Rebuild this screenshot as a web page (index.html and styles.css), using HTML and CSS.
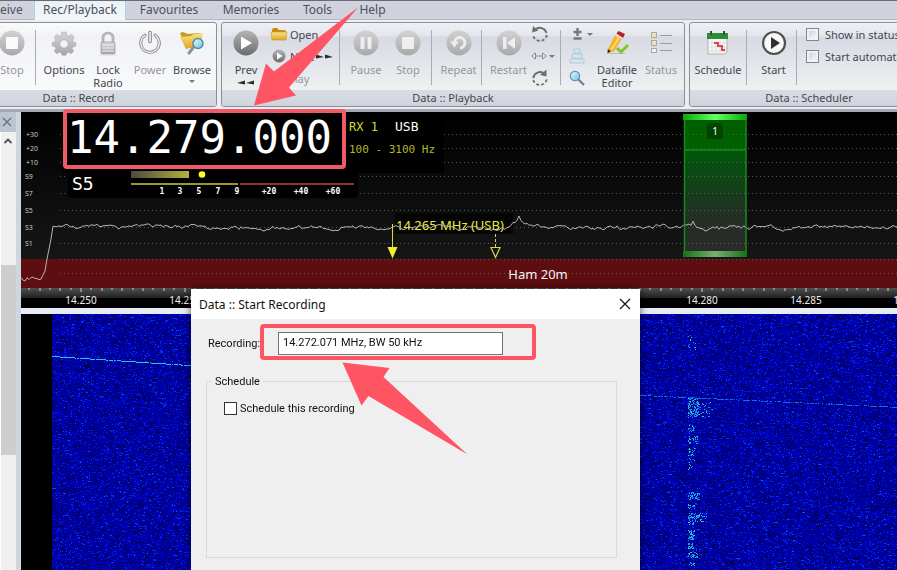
FILE: index.html
```html
<!DOCTYPE html>
<html lang="en">
<head>
<meta charset="utf-8">
<title>Data :: Start Recording</title>
<link rel="stylesheet" href="styles.css">
</head>
<body>
<svg class="defs" aria-hidden="true">
  <defs>
    <linearGradient id="ball" x1="0" y1="0" x2="0" y2="1"><stop offset="0" stop-color="#d2d2d4"/><stop offset="1" stop-color="#a9a9ab"/></linearGradient>
    <linearGradient id="ballDark" x1="0" y1="0" x2="0" y2="1"><stop offset="0" stop-color="#b4b4b6"/><stop offset="1" stop-color="#6c6c6e"/></linearGradient>
    <linearGradient id="metal" x1="0" y1="0" x2="0" y2="1"><stop offset="0" stop-color="#d6d6d6"/><stop offset="1" stop-color="#a6a6a6"/></linearGradient>
    <linearGradient id="gold" x1="0" y1="0" x2="0" y2="1"><stop offset="0" stop-color="#fbe389"/><stop offset="1" stop-color="#dfa51f"/></linearGradient>
    <linearGradient id="glass" x1="0" y1="0" x2="1" y2="1"><stop offset="0" stop-color="#e8fbff"/><stop offset="1" stop-color="#6fc0dc"/></linearGradient>
  </defs>
</svg>
<div class="app">
  <nav class="tabs">
    <a class="tab tab-receive" href="#receive">Receive</a>
    <a class="tab tab-active" href="#rec">Rec/Playback</a>
    <a class="tab tab-wide" href="#favourites">Favourites</a>
    <a class="tab tab-mid" href="#memories">Memories</a>
    <a class="tab tab-small" href="#tools">Tools</a>
    <a class="tab tab-small" href="#help">Help</a>
  </nav>

  <div class="ribbon">
    <section class="group group-record">
      <div class="items">
        <button class="big w46 off"><svg width="28" height="28" viewBox="0 0 28 28"><circle cx="14" cy="14" r="12.500" fill="url(#ball)"/><rect x="8" y="8" width="12" height="12" rx="1" fill="#fafafa"/></svg><span>Stop</span></button>
        <i class="sep"></i>
        <button class="big w50"><svg width="28" height="28" viewBox="0 0 28 28"><g fill="url(#metal)" stroke="#a2a2a2" stroke-width=".6" transform="translate(1.400 1.400) scale(.9)"><path fill-rule="evenodd" d="M11.500 2h5l.6 3.600 2.300 1L22.400 4.500l3 3.200-2 3 .9 2.200L27 13.500v4l-3 .7-1 2.200 1.800 2.600-3 3-2.700-1.700-2.200 1-.7 2.200h-4.400l-.7-2.400-2.200-.9-2.700 1.800-3-3 1.800-2.800-1-2.200-3-.6v-4l3-.6 1-2.200-1.900-3 3-3 3 2 2.100-1zM14 10.500a4.500 4.500 0 1 0 0 9 4.500 4.500 0 0 0 0-9z"/></g></svg><span>Options</span></button>
        <button class="big w42"><svg width="28" height="28" viewBox="0 0 28 28"><path d="M9 14V9a5 5 0 0 1 10 0v5" fill="none" stroke="#9c9c9c" stroke-width="2.600"/><path d="M9 14V9a5 5 0 0 1 10 0v5" fill="none" stroke="#ddd" stroke-width=".8"/><rect x="7" y="13" width="14" height="12" rx="1.500" fill="url(#metal)" stroke="#989898" stroke-width=".7"/><path d="M8 16h12M8 19h12M8 22h12" stroke="#f0f0f0" stroke-width="1"/><path d="M5 26h18" stroke="#ddd"/></svg><span>Lock<br>Radio</span></button>
        <button class="big w42 off"><svg width="28" height="28" viewBox="0 0 28 28"><path d="M9 6.200a9.300 9.300 0 1 0 10 0" fill="none" stroke="#88888b" stroke-width="3" stroke-linecap="round"/><path d="M9 6.200a9.300 9.300 0 1 0 10 0" fill="none" stroke="#f2f2f4" stroke-width="1.200" stroke-linecap="round"/><path d="M14 3.500v9" stroke="#88888b" stroke-width="3.600" stroke-linecap="round"/><path d="M14 3.500v9" stroke="#f2f2f4" stroke-width="1.600" stroke-linecap="round"/></svg><span>Power</span></button>
        <button class="big w42"><svg width="28" height="28" viewBox="0 0 28 28"><path d="M2 4l3-1 5 2 11-1 3 2-2 12-14 1z" fill="#c49d1d"/><path d="M2 8l11-1 3-2 9-1-3 12-14 4z" fill="url(#gold)"/><path d="M15 19l-4 5" stroke="#8694a0" stroke-width="3" stroke-linecap="round"/><circle cx="20" cy="14.500" r="5" fill="url(#glass)" stroke="#50909f" stroke-width="1.500"/></svg><span>Browse</span><b class="caret"></b></button>
      </div>
      <h2>Data :: Record</h2>
    </section>

    <section class="group group-playback">
      <div class="items">
        <button class="big w48"><svg width="28" height="28" viewBox="0 0 28 28"><circle cx="14" cy="14" r="12.500" fill="url(#ballDark)"/><path d="M9 7.500L20 14 9 20.500z" fill="#fff"/></svg><span>Prev</span><svg class="arrows" width="18" height="5" viewBox="0 0 18 5"><path d="M0 3L8 .5v4zM9 3l8-2.500v4z" fill="#2c2c30"/></svg></button>
        <div class="stack stack-files">
          <button class="small"><svg width="18" height="16" viewBox="0 0 18 16"><path d="M2 4q0-2 2-2h3l2 2h5q2 0 2 2v7H2z" fill="#c78b15"/><path d="M1 6h16l-1 8H2z" fill="url(#gold)" stroke="#c89428" stroke-width=".6"/></svg>Open</button>
          <button class="small"><svg width="18" height="16" viewBox="0 0 18 16"><circle cx="9" cy="8" r="6.500" fill="url(#ballDark)"/><path d="M7 4.500L12.500 8 7 11.500z" fill="#fff"/></svg>Next<svg class="next-arrows" width="18" height="5" viewBox="0 0 18 5"><path d="M8 3L0 .5v4zM17 3L9 .5v4z" fill="#2c2c30"/></svg></button>
          <button class="small off small-play">Play</button>
        </div>
        <i class="sep"></i>
        <div class="pair">
          <button class="big w42 off"><svg width="28" height="28" viewBox="0 0 28 28"><circle cx="14" cy="14" r="12.500" fill="url(#ball)"/><path d="M8.500 8h4v12h-4zM15.500 8h4v12h-4z" fill="#eee"/></svg><span>Pause</span></button>
          <button class="big w42 off"><svg width="28" height="28" viewBox="0 0 28 28"><circle cx="14" cy="14" r="12.500" fill="url(#ball)"/><rect x="8" y="8" width="12" height="12" rx="1" fill="#eee"/></svg><span>Stop</span></button>
        </div>
        <i class="sep"></i>
        <button class="big w49 off"><svg width="28" height="28" viewBox="0 0 28 28"><circle cx="14" cy="14" r="12.500" fill="url(#ball)"/><path d="M9.500 13.500A5.200 5.200 0 1 1 15 19" fill="none" stroke="#eee" stroke-width="3"/><path d="M5 12.500h9l-4.500 6z" fill="#eee"/></svg><span>Repeat</span></button>
        <i class="sep"></i>
        <button class="big w49 off"><svg width="28" height="28" viewBox="0 0 28 28"><circle cx="14" cy="14" r="12.500" fill="url(#ball)"/><path d="M8 8h3.500v12H8zM20 8v12l-8-6z" fill="#eee"/></svg><span>Restart</span></button>
        <div class="stack stack-step">
          <button class="glyph" aria-label="Step back"><svg width="18" height="18" viewBox="0 0 18 18"><path d="M5 4a7 7 0 0 1 10.500 4" fill="none" stroke="#6d6e72" stroke-width="2"/><path d="M15.800 10a7 7 0 0 1-13.600 1" fill="none" stroke="#6d6e72" stroke-width="1.800" stroke-dasharray="3 2"/><path d="M1 7.500L2 1l5.500 4.500z" fill="#6d6e72"/></svg></button>
          <button class="glyph" aria-label="Step size"><svg width="16" height="8" viewBox="0 0 16 8"><path d="M4.500 1v6L.7 4zM11.500 1v6l3.800-3z" fill="#eee" stroke="#8a8a8e"/><path d="M5 4h6" stroke="#8a8a8e"/></svg><b class="caret"></b></button>
          <button class="glyph" aria-label="Step forward"><svg width="18" height="18" viewBox="0 0 18 18"><path d="M12.500 4A7 7 0 0 0 2.200 9" fill="none" stroke="#6d6e72" stroke-width="2"/><path d="M2.200 11a7 7 0 0 0 13.600-1" fill="none" stroke="#6d6e72" stroke-width="1.800" stroke-dasharray="3 2"/><path d="M15.500 .5v7L9 6z" fill="#6d6e72"/></svg></button>
        </div>
        <i class="sep"></i>
        <div class="stack stack-zoom">
          <button class="glyph" aria-label="Gain"><svg width="16" height="14" viewBox="0 0 16 14"><path d="M4.500 5h8M8.500 1v8M4.500 11.500h8" stroke="#77777b" stroke-width="2.400"/></svg><b class="caret"></b></button>
          <button class="glyph" aria-label="Layout"><svg width="16" height="16" viewBox="0 0 16 16"><path d="M5 1h6v4H5zM3 6h10v4H3zM1 11h14v4H1z" fill="#d3e6f2" stroke="#a7c2d4" stroke-width=".8"/></svg></button>
          <button class="glyph" aria-label="Zoom"><svg width="16" height="16" viewBox="0 0 16 16"><path d="M9.500 9.500L15 15" stroke="#77838d" stroke-width="2.400"/><circle cx="6" cy="6" r="4.700" fill="url(#glass)" stroke="#5c93b8" stroke-width="1.200"/></svg></button>
        </div>
        <button class="big w44"><svg width="28" height="28" viewBox="0 0 28 28"><path d="M4 24.500h18" stroke="#bbb"/><path d="M5 20L12 6l7 3.500L11.500 22 5 24z" fill="#f3b32c"/><path d="M8.500 20.500L16 8.500" stroke="#ffda76" stroke-width="2"/><path d="M13.500 4.500l2-2.500L22 5l-2 4z" fill="#b51f29"/><path d="M12.500 6l7 3.500" stroke="#ddd" stroke-width="1.500"/><path d="M4.800 20l3 2.500-3.300 1.500z" fill="#222"/><path d="M14 19l4 4 7-7" fill="none" stroke="#76cb25" stroke-width="3"/></svg><span>Datafile<br>Editor</span></button>
        <button class="big w44 off"><svg width="28" height="28" viewBox="0 0 28 28"><g stroke="#aaa598"><path d="M4.500 3.500h5v5h-5zM4.500 11.500h5v5h-5z" fill="#f2e1b4"/><path d="M4.500 19.500h5v4h-5z" fill="#f4f4f4"/></g><path d="M13 6.500h12M13 14.500h12M13 21.500h12" stroke="#9a9ca2"/></svg><span>Status</span></button>
      </div>
      <h2>Data :: Playback</h2>
    </section>

    <section class="group group-scheduler">
      <div class="items">
        <button class="big w56"><svg width="28" height="28" viewBox="0 0 28 28"><path d="M4 7h19v16l-2 2H4z" fill="#f8f8f8" stroke="#999" stroke-width=".7"/><path d="M3 4h21v6H3z" fill="#288f36"/><path d="M7 2v4M20 2v4" stroke="#444" stroke-width="2"/><path d="M5 14h17M5 18h17M5 22h17M8 11v13M12 11v13M16 11v13M20 11v13" stroke="#d4d4d4" stroke-width=".7"/><path d="M10 14h4v3h4v4h3" fill="none" stroke="#d9484e" stroke-width="2"/></svg><span>Schedule</span></button>
        <i class="sep"></i>
        <button class="big w49"><svg width="28" height="28" viewBox="0 0 28 28"><circle cx="14" cy="14" r="11" fill="#f8f8f8" stroke="#505054" stroke-width="2.200"/><path d="M11 8l9 6-9 6z" fill="#303034"/></svg><span>Start</span></button>
        <i class="sep"></i>
        <div class="stack stack-checks">
          <label class="check"><input type="checkbox">Show in status bar</label>
          <label class="check"><input type="checkbox">Start automatically</label>
        </div>
      </div>
      <h2>Data :: Scheduler</h2>
    </section>
  </div>

  <div class="work">
    <aside class="rail">
      <button class="rail-close" aria-label="Close panel"><svg width="12" height="12" viewBox="0 0 12 12"><path d="M2 2l8 8M10 2l-8 8" stroke="#6a6e74" stroke-width="1.200"/></svg></button>
      <div class="scroll">
        <svg class="scroll-up" width="10" height="8" viewBox="0 0 10 8"><path d="M1.500 6L5 2.500 8.500 6" fill="none" stroke="#505050" stroke-width="1.800"/></svg>
        <div class="thumb"></div>
      </div>
    </aside>
    <main class="receiver">
      <svg class="spectrum" width="100%" height="176">
        <defs>
          <linearGradient id="sky" x1="0" y1="0" x2="0" y2="1"><stop offset="0" stop-color="#000"/><stop offset="1" stop-color="#161616"/></linearGradient>
          <linearGradient id="meter"><stop offset="0" stop-color="#4a4a44"/><stop offset="1" stop-color="#b3b13c"/></linearGradient>
          <linearGradient id="cap"><stop offset="0" stop-color="#0aa80a"/><stop offset=".5" stop-color="#66ff66"/><stop offset="1" stop-color="#0aa80a"/></linearGradient>
          <linearGradient id="foot"><stop offset="0" stop-color="#107510"/><stop offset=".5" stop-color="#78ae78"/><stop offset="1" stop-color="#107510"/></linearGradient>
          <linearGradient id="band" x1="0" y1="0" x2="0" y2="1"><stop offset="0" stop-color="#00560a"/><stop offset=".65" stop-color="#242f26"/><stop offset="1" stop-color="#2a2a2a"/></linearGradient>
        </defs>
        <rect width="100%" height="147" fill="url(#sky)"/>
        <rect y="147" width="100%" height="29" fill="#5e0e11"/>
        <rect x="663" y="8" width="62" height="30" fill="#006000"/>
        <rect x="663" y="38" width="62" height="102" fill="url(#band)"/>
        <g class="grid">
          <path d="M39 22h2000M39 36h2000M39 50h2000M39 64h2000M39 81h2000M39 98h2000M39 115h2000M39 131h2000M39 147h2000M39 161h2000" transform="translate(0 .5)"/>
        </g>
        <g class="levels">
          <text x="5" y="25">+30</text><text x="5" y="39">+20</text><text x="5" y="53">+10</text><text x="4" y="67">S9</text><text x="4" y="84">S7</text><text x="4" y="101">S5</text><text x="4" y="118">S3</text><text x="4" y="134">S1</text>
        </g>
        <rect x="42" width="381" height="61" fill="#000"/>
        <rect x="47" y="50" width="290" height="36" rx="4" fill="#000"/>
        <text class="frequency" x="46" y="41">14.279.000</text>
        <text class="rx" x="328" y="19">RX 1</text>
        <text class="mode" x="374" y="19">USB</text>
        <text class="filter" x="328" y="41">100 - 3100 Hz</text>
        <text class="signal" x="51" y="78">S5</text>
        <rect x="110" y="59" width="58" height="7" fill="url(#meter)"/>
        <circle cx="181" cy="62.500" r="3.300" fill="#fdfd20"/>
        <path d="M110 72h107" stroke="#99962e" stroke-width="2"/>
        <path d="M219 72h114" stroke="#93302f" stroke-width="2"/>
        <g class="meter-scale"><text x="141" y="82">1</text><text x="159" y="82">3</text><text x="178" y="82">5</text><text x="197" y="82">7</text><text x="216" y="82">9</text><text x="248" y="82">+20</text><text x="280" y="82">+40</text><text x="312" y="82">+60</text></g>
        <rect x="374" y="101" width="118" height="21" fill="#050505"/>
        <text class="marker" x="375" y="118">14.265 MHz (USB)</text>
        <path d="M371.500 112v24" stroke="#d8d850"/>
        <path d="M366.500 135h10l-5 11.500z" fill="#f0f030"/>
        <path d="M474.500 122v14" stroke="#d8d850" stroke-dasharray="3 2"/>
        <path d="M470 135.500h9l-4.500 10z" fill="none" stroke="#d8d850" stroke-width="1.200"/>
        <polyline id="trace" fill="none" stroke="#b4b4b4" stroke-width="1"/>
        <path d="M663.500 8v132M725 8v132M663 38h62" stroke="#178a1d" stroke-width="1.500"/>
        <rect x="662" y="2" width="64" height="6" fill="url(#cap)"/>
        <rect x="662" y="139" width="64" height="6" fill="url(#foot)"/>
        <rect x="686" y="11" width="16" height="16" rx="2" fill="#004400"/>
        <text class="slot" x="694" y="23">1</text>
        <text class="band-name" x="517" y="167">Ham 20m</text>
      </svg>
      <svg class="axis" width="100%" height="20">
        <defs><linearGradient id="rule" x1="0" y1="0" x2="0" y2="1"><stop offset="0" stop-color="#505050"/><stop offset="1" stop-color="#202020"/></linearGradient></defs>
        <rect width="100%" height="10" fill="url(#rule)"/>
        <g id="ticks" fill="#8c8c8c"></g>
        <g id="labels"></g>
      </svg>
      <canvas id="waterfall" class="waterfall"></canvas>
    </main>
  </div>

  <form class="dialog">
    <header>
      <h1>Data :: Start Recording</h1>
      <button type="button" class="close" aria-label="Close"><svg width="12" height="12" viewBox="0 0 12 12"><path d="M1 1l10 10M11 1L1 11" stroke="#111" stroke-width="1.200"/></svg></button>
    </header>
    <div class="field">
      <label for="recording">Recording:</label>
      <input id="recording" type="text" value="14.272.071 MHz, BW 50 kHz">
    </div>
    <fieldset>
      <legend>Schedule</legend>
      <label class="tick"><input type="checkbox">Schedule this recording</label>
    </fieldset>
  </form>

  <svg class="notes" width="897" height="570" aria-hidden="true">
    <rect x="65" y="111" width="279" height="56" rx="2" fill="none" stroke="#f05a68" stroke-width="4"/>
    <path d="M254 105.500L266 63.500 274 71.500 358.500 7 289 87.500 296 95.500z" fill="#ff5464"/>
    <rect x="262" y="326" width="272" height="32" rx="2" fill="none" stroke="#ff5464" stroke-width="4"/>
    <path d="M342.500 362.500L389.500 368 383.500 377 467.500 454.500 368.500 396 361.500 405.500z" fill="#ff5464"/>
  </svg>
</div>
<script src="script.js"></script>
</body>
</html>
```
FILE: styles.css
```css
* { box-sizing: border-box; }
body {
  margin: 0;
  font: 12px/13px "Noto Sans", "Open Sans", sans-serif;
  color: #44464e;
  background: #d3d7e0;
}
button {
  border: 0;
  padding: 0;
  background: none;
  font: inherit;
  color: inherit;
}
h1, h2 { margin: 0; font-weight: 400; }
.defs { position: absolute; width: 0; height: 0; }
.app {
  position: relative;
  display: flex;
  flex-direction: column;
  height: 100vh;
  overflow: hidden;
}

/* tabs */
.tabs {
  display: flex;
  flex: none;
  height: 20px;
  border-top: 1px solid #686a74;
  border-bottom: 1px solid #b4b7bf;
  background: #d0d3dd;
}
.tab {
  color: #4c4f59;
  text-decoration: none;
  text-align: center;
  line-height: 17px;
}
.tab-receive { width: 54px; margin-left: -20px; padding-right: 16px; text-align: right; }
.tab-active {
  width: 92px;
  height: 20px;
  border: 1px solid #b5cdd9;
  border-width: 0 1px;
  background: linear-gradient(#eaf1f6, #f4f7fa);
}
.tab-wide { width: 86px; }
.tab-mid { width: 78px; }
.tab-small { width: 55px; }

/* ribbon */
.ribbon {
  display: flex;
  flex: none;
  gap: 4px;
  height: 92px;
  padding: 2px 0 2px;
  overflow: hidden;
  background: #eceef2;
  border-bottom: 3px solid #a3a8b2;
}
.group {
  display: flex;
  flex-direction: column;
  flex: none;
  border: 1px solid #8c8f98;
  border-radius: 3px;
  background: linear-gradient(#eff0f4 0, #e3e5eb 13px, #d7dae3 14px, #e2e5ea 40px, #eff1f2 68px);
  overflow: hidden;
}
.group-record { width: 229px; margin-left: -12px; background: linear-gradient(#fbfbfc, #f1f2f6 14px, #f9fafb 68px); }
.group-playback { width: 464px; }
.group-scheduler { width: 240px; flex-grow: 1; }
.group h2 {
  height: 16px;
  font-size: 11px;
  line-height: 16px;
  text-align: center;
  background: linear-gradient(#d9dce4, #cfd3dc);
}
.group-record h2 { padding-right: 48px; }
.items { display: flex; flex: 1; min-height: 0; }
.sep { flex: none; width: 1px; height: 55px; margin-top: 7px; background: #a9acb5; }
.big {
  display: flex;
  flex-direction: column;
  align-items: center;
  flex: none;
  padding-top: 6px;
  font-size: 11px;
}
.big > span { margin-top: 6px; }
.w42 { width: 42px; }
.w44 { width: 44px; }
.w46 { width: 46px; }
.w48 { width: 48px; }
.w49 { width: 49px; padding-left: 4px; }
.w50 { width: 51px; padding-left: 5px; }
.w56 { width: 56px; }
.off { color: #94969c; }
.caret {
  width: 0;
  height: 0;
  border: 3px solid transparent;
  border-top-color: #77797f;
  border-bottom: 0;
}
.big .caret { margin-top: 4px; }
.arrows { margin-top: 4px; }
.pair { display: flex; padding: 0 2px 0 5px; }
.stack {
  display: flex;
  flex-direction: column;
  flex: none;
}
.stack > * { height: 22px; }
.stack-files { width: 69px; }
.small { display: flex; align-items: center; gap: 2px; font-size: 11px; white-space: nowrap; }
.small-play { padding-left: 18px; }
.next-arrows { flex: none; }
.glyph { display: flex; align-items: center; gap: 2px; }
.stack-step { width: 29px; }
.stack-zoom { width: 34px; padding-left: 8px; }
.stack-checks { padding-left: 9px; }
.check { display: flex; align-items: center; gap: 6px; font-size: 11px; white-space: nowrap; }
.check input {
  appearance: none;
  width: 13px;
  height: 13px;
  margin: 0;
  border: 1px solid #82868f;
  background: linear-gradient(135deg, #c7cbd1, #fff);
  box-shadow: inset 0 0 0 2px #f1f2f4;
}

/* work area */
.work { display: flex; flex: 1; min-height: 0; }
.rail {
  display: flex;
  flex-direction: column;
  flex: none;
  width: 21px;
  padding-right: 5px;
  background: #cfd6de;
}
.rail-close {
  display: flex;
  align-items: center;
  padding-left: 1px;
  height: 20px;
  background: #bbc4d0;
}
.scroll { flex: 1; background: #f0f0f0; border-left: 1px solid #fff; }
.scroll-up { display: block; margin: 5px auto 0 2px; }
.thumb { height: 190px; margin-top: 120px; background: #cdcdcd; }
.receiver {
  display: flex;
  flex-direction: column;
  flex: 1;
  min-width: 0;
  background: #e8edf5;
}
.spectrum, .axis { display: block; flex: none; }
.axis { background: #000; }
.waterfall { flex: 1; min-height: 0; width: 100%; margin-top: 6px; background: #00009c; }

.grid { stroke: #585858; stroke-dasharray: 1 3; }
.levels { font-size: 7px; fill: #c8c8c8; }
.frequency, .rx, .mode, .filter, .signal, .meter-scale { font-family: "DejaVu Sans Mono", monospace; fill: #fff; }
.frequency { font-size: 44px; }
.rx { font-size: 12px; fill: #d6d62c; }
.mode { font-size: 13px; }
.filter { font-size: 11px; fill: #b5b52a; }
.signal { font-size: 18px; }
.meter-scale { font-size: 8px; font-weight: 700; text-anchor: middle; }
.marker { font-size: 13px; fill: #eeee38; }
.slot { font-size: 10px; fill: #fff; text-anchor: middle; }
.band-name { font-size: 13px; fill: #f4f4f4; text-anchor: middle; }
#labels { font-size: 10px; fill: #eee; text-anchor: middle; }

/* dialog */
.dialog {
  position: absolute;
  left: 191px;
  top: 289px;
  bottom: 0;
  width: 449px;
  background: #efefef;
  color: #111;
  font-family: Roboto, "Liberation Sans", sans-serif;
  font-size: 11px;
  box-shadow: 0 0 8px rgba(0, 0, 0, .6);
}
.dialog header {
  display: flex;
  align-items: center;
  justify-content: space-between;
  height: 30px;
  padding: 0 9px 0 8px;
  background: #fff;
}
.dialog h1 { font-family: "Noto Sans", sans-serif; font-size: 12px; }
.close { display: flex; }
.field { display: flex; align-items: center; padding: 13px 17px 0; }
.field label { width: 70px; line-height: 21px; }
.field input {
  width: 225px;
  height: 23px;
  padding: 0 4px 2px;
  border: 1px solid #747474;
  background: #fff;
  font: inherit;
  color: #111;
}
.dialog fieldset {
  height: 183px;
  margin: 20px 23px 0 15px;
  padding: 14px 17px;
  border: 1px solid #d9d9d9;
}
.dialog legend { margin-left: -12px; padding: 0 3px; }
.tick { display: flex; align-items: center; gap: 3px; }
.tick input {
  appearance: none;
  width: 13px;
  height: 13px;
  margin: 0;
  border: 1px solid #333;
  background: #fff;
}

/* annotations lie over the whole window */
.notes { position: absolute; left: 0; top: 0; pointer-events: none; }
```
FILE: script.js
```js
(function () {
  var seed = 20250;
  function rnd() {
    seed = (seed * 1664525 + 1013904223) % 4294967296;
    return seed / 4294967296;
  }

  // spectrum trace: filter skirt on the left, then the noise floor
  var points = [], drift = 0;
  for (var x = 0; x < 2000; x += 2) {
    drift = drift * 0.75 + (rnd() - 0.5) * 3;
    var y = 115.5 + drift + (rnd() - 0.5) * 1.6;
    if (x < 20) y = 163 + (rnd() - 0.5) * 4 + 4;
    else if (x < 25) y = 167 - (x - 20) * 2;
    else if (x < 32) y = 157 - (x - 24) * 5;
    // a station just above the marker
    if (x > 484 && x < 512) y -= 8 * (1 - Math.abs(x - 498) / 14);
    if (x === 498) y -= 3;
    if (x > 668 && x < 676) y -= 4 - Math.abs(x - 672);
    points.push(x + "," + y.toFixed(1));
  }
  document.getElementById("trace").setAttribute("points", points.join(" "));

  // frequency axis: 20.7 px per kHz
  var ns = "http://www.w3.org/2000/svg";
  var ticks = document.getElementById("ticks");
  var labels = document.getElementById("labels");
  for (var k = -5; k < 180; k++) {
    var px = 60 + k * 10.35;
    var r = document.createElementNS(ns, "rect");
    r.setAttribute("x", Math.round(px) - 1);
    r.setAttribute("width", 2);
    r.setAttribute("height", k % 10 === 0 ? 4 : k % 2 === 0 ? 3 : 2);
    ticks.appendChild(r);
    if (k >= 0 && k % 10 === 0) {
      var t = document.createElementNS(ns, "text");
      t.setAttribute("x", Math.round(px));
      t.setAttribute("y", 16);
      t.textContent = (14.25 + k * 0.0005).toFixed(3);
      labels.appendChild(t);
    }
  }

  // waterfall
  var c = document.getElementById("waterfall");
  var w = c.width = c.clientWidth, h = c.height = c.clientHeight;
  var g = c.getContext("2d");
  var img = g.createImageData(w, h), d = img.data;
  function put(x, y, r, gr, b) {
    x = Math.round(x); y = Math.round(y);
    if (x < 0 || y < 0 || x >= w || y >= h) return;
    var i = (y * w + x) * 4;
    d[i] = r; d[i + 1] = gr; d[i + 2] = b; d[i + 3] = 255;
  }
  for (var yy = 0; yy < h; yy++) {
    var prev = 0.5;
    for (var xx = 0; xx < w; xx++) {
      if (xx < 31) { put(xx, yy, 0, 0, 0); continue; }
      var v = (rnd() + rnd()) / 2;
      v = v * 0.75 + prev * 0.25;
      prev = v;
      var b = Math.max(30, Math.min(240, 160 + (v - 0.5) * 300));
      var gr = v > 0.7 ? (v - 0.7) * 480 : 0;
      put(xx, yy, 0, gr, b);
    }
  }
  // slow drifting carrier
  for (var lx = 31; lx < w; lx++) {
    var ly = lx < 300 ? 42 + (lx - 31) * 0.066 : 81 + (lx - 619) * 0.046;
    var strong = lx < 300;
    if (rnd() < (strong ? 0.95 : 0.65)) put(lx, ly, strong ? 40 : 20, strong ? 190 : 110, strong ? 240 : 225);
  }
  // voice signal: top, bottom, width, density
  [[22, 38, 9, 0.12], [84, 104, 11, 0.42], [88, 103, 25, 0.13], [111, 118, 6, 0.3],
   [122, 130, 10, 0.42], [134, 142, 8, 0.3], [144, 156, 7, 0.18], [178, 186, 12, 0.4],
   [190, 195, 7, 0.35], [199, 208, 19, 0.38], [208, 211, 6, 0.45], [216, 227, 7, 0.45],
   [229, 235, 6, 0.6], [238, 244, 10, 0.5], [248, 253, 8, 0.35]].forEach(function (s) {
    for (var sy = s[0]; sy < s[1]; sy++)
      for (var sx = 0; sx < s[2]; sx++)
        if (rnd() < s[3]) put(667 + sx, sy, 20, 120 + rnd() * 110, 230);
  });
  g.putImageData(img, 0, 0);
})();
```
